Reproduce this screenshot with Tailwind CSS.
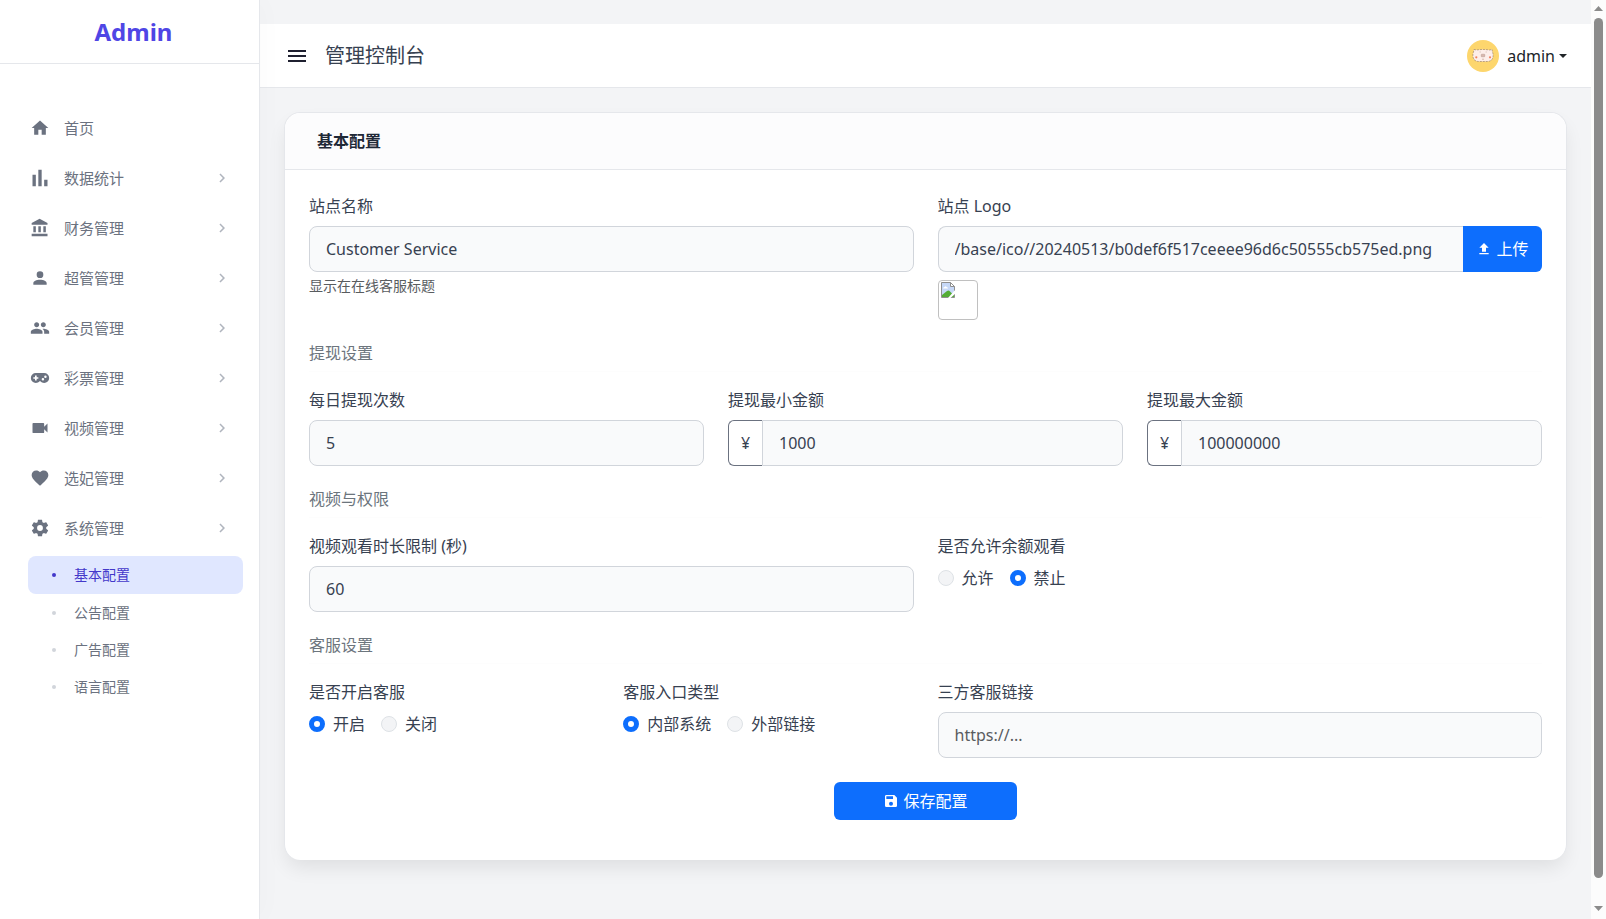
<!DOCTYPE html>
<html lang="zh-CN">
<head>
    <meta charset="UTF-8">
    <meta name="viewport" content="width=device-width, initial-scale=1.0">
    <title>管理控制台</title>
    <script src="https://cdn.jsdelivr.net/npm/@tailwindcss/browser@4"></script>
</head>
<body class="flex min-h-screen bg-[#f3f4f6] text-[#374151] font-['Noto_Sans','Noto_Sans_CJK_SC',sans-serif]">
    <!-- Icons -->
    <svg class="hidden">
        <symbol id="i-chevron" viewBox="0 0 24 24"><path d="M8.59,16.58L13.17,12L8.59,7.41L10,6L16,12L10,18L8.59,16.58Z"/></symbol>
    </svg>

    <!-- Sidebar -->
    <aside class="relative z-10 w-[260px] shrink-0 bg-white border-r border-[#e5e7eb] shadow-[4px_0_24px_rgba(0,0,0,0.02)]">
        <div class="h-16 flex items-center justify-center pl-2 border-b border-[#e5e7eb]">
            <a href="#" class="text-2xl font-bold text-[#4f46e5]">Admin</a>
        </div>
        <nav class="pt-[39px] text-[15px] text-[#6b7280]">
            <a href="#" class="h-[50px] pl-[30px] pr-7 flex items-center gap-3.5">
                <svg class="size-5 fill-current" viewBox="0 0 24 24"><path d="M10,20V14H14V20H19V12H22L12,3L2,12H5V20H10Z"/></svg>
                <span class="flex-1">首页</span>
            </a>
            <a href="#" class="h-[50px] pl-[30px] pr-7 flex items-center gap-3.5">
                <svg class="size-5 fill-current" viewBox="0 0 24 24"><path d="M3,22V8H7V22H3M10,22V2H14V22H10M17,22V14H21V22H17Z"/></svg>
                <span class="flex-1">数据统计</span>
                <svg class="size-[18px] fill-[#b0b5be]"><use href="#i-chevron"/></svg>
            </a>
            <a href="#" class="h-[50px] pl-[30px] pr-7 flex items-center gap-3.5">
                <svg class="size-5 fill-current" viewBox="0 0 24 24"><path d="M11.5,1L2,6V8H21V6M16,10V17H19V10M2,22H21V19H2M10,10V17H13V10M4,10V17H7V10H4Z"/></svg>
                <span class="flex-1">财务管理</span>
                <svg class="size-[18px] fill-[#b0b5be]"><use href="#i-chevron"/></svg>
            </a>
            <a href="#" class="h-[50px] pl-[30px] pr-7 flex items-center gap-3.5">
                <svg class="size-5 fill-current" viewBox="0 0 24 24"><path d="M12,4A4,4 0 0,1 16,8A4,4 0 0,1 12,12A4,4 0 0,1 8,8A4,4 0 0,1 12,4M12,14C16.42,14 20,15.79 20,18V20H4V18C4,15.79 7.58,14 12,14Z"/></svg>
                <span class="flex-1">超管管理</span>
                <svg class="size-[18px] fill-[#b0b5be]"><use href="#i-chevron"/></svg>
            </a>
            <a href="#" class="h-[50px] pl-[30px] pr-7 flex items-center gap-3.5">
                <svg class="size-5 fill-current" viewBox="0 0 24 24"><path d="M16 11c1.66 0 2.99-1.34 2.99-3S17.66 5 16 5c-1.66 0-3 1.34-3 3s1.34 3 3 3zm-8 0c1.66 0 2.99-1.34 2.99-3S9.66 5 8 5C6.34 5 5 6.34 5 8s1.34 3 3 3zm0 2c-2.33 0-7 1.17-7 3.5V19h14v-2.5c0-2.33-4.67-3.5-7-3.5zm8 0c-.29 0-.62.02-.97.05 1.16.84 1.97 1.97 1.97 3.45V19h6v-2.5c0-2.33-4.67-3.5-7-3.5z"/></svg>
                <span class="flex-1">会员管理</span>
                <svg class="size-[18px] fill-[#b0b5be]"><use href="#i-chevron"/></svg>
            </a>
            <a href="#" class="h-[50px] pl-[30px] pr-7 flex items-center gap-3.5">
                <svg class="size-5 fill-current" viewBox="0 0 24 24"><path d="M7,6H17A6,6 0 0,1 23,12A6,6 0 0,1 17,18C15.22,18 13.63,17.23 12.53,16H11.47C10.37,17.23 8.78,18 7,18A6,6 0 0,1 1,12A6,6 0 0,1 7,6M6,9V11H4V13H6V15H8V13H10V11H8V9H6M15.5,12A1.5,1.5 0 0,0 14,13.5A1.5,1.5 0 0,0 15.5,15A1.5,1.5 0 0,0 17,13.5A1.5,1.5 0 0,0 15.5,12M18.5,9A1.5,1.5 0 0,0 17,10.5A1.5,1.5 0 0,0 18.5,12A1.5,1.5 0 0,0 20,10.5A1.5,1.5 0 0,0 18.5,9Z"/></svg>
                <span class="flex-1">彩票管理</span>
                <svg class="size-[18px] fill-[#b0b5be]"><use href="#i-chevron"/></svg>
            </a>
            <a href="#" class="h-[50px] pl-[30px] pr-7 flex items-center gap-3.5">
                <svg class="size-5 fill-current" viewBox="0 0 24 24"><path d="M17,10.5V7A1,1 0 0,0 16,6H4A1,1 0 0,0 3,7V17A1,1 0 0,0 4,18H16A1,1 0 0,0 17,17V13.5L21,17.5V6.5L17,10.5Z"/></svg>
                <span class="flex-1">视频管理</span>
                <svg class="size-[18px] fill-[#b0b5be]"><use href="#i-chevron"/></svg>
            </a>
            <a href="#" class="h-[50px] pl-[30px] pr-7 flex items-center gap-3.5">
                <svg class="size-5 fill-current" viewBox="0 0 24 24"><path d="M12,21.35L10.55,20.03C5.4,15.36 2,12.27 2,8.5C2,5.41 4.42,3 7.5,3C9.24,3 10.91,3.81 12,5.08C13.09,3.81 14.76,3 16.5,3C19.58,3 22,5.41 22,8.5C22,12.27 18.6,15.36 13.45,20.03L12,21.35Z"/></svg>
                <span class="flex-1">选妃管理</span>
                <svg class="size-[18px] fill-[#b0b5be]"><use href="#i-chevron"/></svg>
            </a>
            <a href="#" class="h-[50px] pl-[30px] pr-7 flex items-center gap-3.5">
                <svg class="size-5 fill-current" viewBox="0 0 24 24"><path d="M12,15.5A3.5,3.5 0 0,1 8.5,12A3.5,3.5 0 0,1 12,8.5A3.5,3.5 0 0,1 15.5,12A3.5,3.5 0 0,1 12,15.5M19.43,12.97C19.47,12.65 19.5,12.33 19.5,12C19.5,11.67 19.47,11.34 19.43,11L21.54,9.37C21.73,9.22 21.78,8.95 21.66,8.73L19.66,5.27C19.54,5.05 19.27,4.96 19.05,5.05L16.56,6.05C16.04,5.66 15.5,5.32 14.87,5.07L14.5,2.42C14.46,2.18 14.25,2 14,2H10C9.75,2 9.54,2.18 9.5,2.42L9.13,5.07C8.5,5.32 7.96,5.66 7.44,6.05L4.95,5.05C4.73,4.96 4.46,5.05 4.34,5.27L2.34,8.73C2.21,8.95 2.27,9.22 2.46,9.37L4.57,11C4.53,11.34 4.5,11.67 4.5,12C4.5,12.33 4.53,12.65 4.57,12.97L2.46,14.63C2.27,14.78 2.21,15.05 2.34,15.27L4.34,18.73C4.46,18.95 4.73,19.03 4.95,18.95L7.44,17.94C7.96,18.34 8.5,18.68 9.13,18.93L9.5,21.58C9.54,21.82 9.75,22 10,22H14C14.25,22 14.46,21.82 14.5,21.58L14.87,18.93C15.5,18.67 16.04,18.34 16.56,17.94L19.05,18.95C19.27,19.03 19.54,18.95 19.66,18.73L21.66,15.27C21.78,15.05 21.73,14.78 21.54,14.63L19.43,12.97Z"/></svg>
                <span class="flex-1">系统管理</span>
                <svg class="size-[18px] fill-[#b0b5be]"><use href="#i-chevron"/></svg>
            </a>
            <!-- Submenu -->
            <div class="ml-7 mr-4 pt-[3px] text-sm">
                <a href="#" class="h-[38px] pl-6 flex items-center gap-[18px] rounded-lg bg-[#e0e7ff] text-[#4338ca]"><span class="size-1 rounded-full bg-[#4338ca]"></span>基本配置</a>
                <a href="#" class="h-[37px] pl-6 flex items-center gap-[18px]"><span class="size-1 rounded-full bg-[#d1d5db]"></span>公告配置</a>
                <a href="#" class="h-[37px] pl-6 flex items-center gap-[18px]"><span class="size-1 rounded-full bg-[#d1d5db]"></span>广告配置</a>
                <a href="#" class="h-[37px] pl-6 flex items-center gap-[18px]"><span class="size-1 rounded-full bg-[#d1d5db]"></span>语言配置</a>
            </div>
        </nav>
    </aside>

    <div class="flex-1 min-w-0 pt-6">
        <!-- Top bar -->
        <header class="h-16 pl-[25px] pr-6 flex items-center bg-white border-b border-[#e5e7eb]">
            <button type="button" aria-label="菜单">
                <svg class="size-6 fill-[#1f2030]" viewBox="0 0 24 24"><path d="M3,6H21V8H3V6M3,11H21V13H3V11M3,16H21V18H3V16Z"/></svg>
            </button>
            <h1 class="ml-4 flex-1 text-xl">管理控制台</h1>
            <button type="button" class="flex items-center text-[#212529]">
                <svg class="size-8 mr-2" viewBox="0 0 32 32">
                    <circle cx="16" cy="16" r="16" fill="#fdd66d"/>
                    <path d="M7 9.500l2.500.5q6.500-1 13 0l2.500-.5.5 2.500q1.500 4-.5 7.500-2 2-4.500 2h-9q-2.500 0-4.500-2-2-3.500-.5-7.500z" fill="#fdeeea" stroke="#8d7567" stroke-width=".6" stroke-dasharray="2 1"/>
                    <rect x="14.200" y="14.200" width="3.600" height="2.600" rx=".6" fill="#d9b8ae" stroke="#a98c84" stroke-width=".4"/>
                    <circle cx="9.300" cy="17.300" r="1.100" fill="#f0805f"/>
                    <circle cx="23" cy="17.300" r="1.100" fill="#f0805f"/>
                    <circle cx="16" cy="19.300" r=".7" fill="#c9a79c"/>
                    <path d="M12.500 12h1.500M18.500 12H20" stroke="#cdb4aa" stroke-width=".6"/>
                </svg>
                admin
                <span class="ml-1 border-x-4 border-x-transparent border-t-4 border-t-[#212529]"></span>
            </button>
        </header>

        <main class="p-6 pb-14">
            <section class="rounded-2xl bg-white border border-[#e5e7eb] border-b-0 shadow-[0_10px_20px_-3px_rgba(0,0,0,0.09)]">
                <h2 class="h-[57px] px-8 flex items-center rounded-t-2xl bg-[#fcfcfd] border-b border-[#e5e7eb] font-semibold text-[#1f2937]">基本配置</h2>

                <form class="px-6 pt-6 pb-10">
                    <div class="grid grid-cols-2 gap-6">
                        <div>
                            <label for="site-name" class="block mb-2">站点名称</label>
                            <input id="site-name" type="text" value="Customer Service" class="block w-full h-[46px] px-4 rounded-lg border border-[#d1d5db] bg-[#f9fafb]">
                            <p class="mt-1 text-sm text-[#595c5f]">显示在在线客服标题</p>
                        </div>
                        <div>
                            <label for="site-logo" class="block mb-2">站点 Logo</label>
                            <div class="flex h-[46px]">
                                <input id="site-logo" type="text" value="/base/ico//20240513/b0def6f517ceeee96d6c50555cb575ed.png" class="flex-1 min-w-0 px-4 rounded-l-lg border border-r-0 border-[#d1d5db] bg-[#f9fafb]">
                                <button type="button" class="w-[79px] flex items-center justify-center gap-1 rounded-r-md bg-[#0d6efd] text-white">
                                    <svg class="size-4 fill-current" viewBox="0 0 24 24"><path d="M9,16V10H5L12,3L19,10H15V16H9M5,20V18H19V20H5Z"/></svg>
                                    上传
                                </button>
                            </div>
                            <!-- Logo preview, image missing -->
                            <div class="mt-2 size-10 p-px rounded border border-[#c0c0c0]">
                                <svg class="size-4" viewBox="0 0 16 16">
                                    <path d="M1.500 .5h9l4 4v11h-13z" fill="#c6d8f7" stroke="#8f8f8f"/>
                                    <path d="M10.500 .5v4h4z" fill="#fff" stroke="#8f8f8f"/>
                                    <path d="M3 6.500q0-1.500 1.500-1.500 1-1.500 2 0 1.500 0 1.500 1.500z" fill="#fff"/>
                                    <path d="M2 15v-2l5-4q2-1 3 .5l4 4V15z" fill="#54ad35"/>
                                    <path d="M15.500 7.500L8 16h2.500l5-4.500z" fill="#fff"/>
                                </svg>
                            </div>
                        </div>
                    </div>

                    <h3 class="mt-6 mb-4 pb-2 leading-[19px] border-b border-[#fdfdfd] text-[#6c757d]">提现设置</h3>
                    <div class="grid grid-cols-3 gap-6">
                        <div>
                            <label for="daily" class="block mb-2">每日提现次数</label>
                            <input id="daily" type="text" value="5" class="block w-full h-[46px] px-4 rounded-lg border border-[#d1d5db] bg-[#f9fafb]">
                        </div>
                        <div>
                            <label for="min-amount" class="block mb-2">提现最小金额</label>
                            <div class="flex h-[46px]">
                                <span class="w-[34px] flex items-center justify-center rounded-l-md border border-r-0 border-[#6b7280]">¥</span>
                                <input id="min-amount" type="text" value="1000" class="flex-1 min-w-0 px-4 rounded-r-lg border border-[#d1d5db] bg-[#f9fafb]">
                            </div>
                        </div>
                        <div>
                            <label for="max-amount" class="block mb-2">提现最大金额</label>
                            <div class="flex h-[46px]">
                                <span class="w-[34px] flex items-center justify-center rounded-l-md border border-r-0 border-[#6b7280]">¥</span>
                                <input id="max-amount" type="text" value="100000000" class="flex-1 min-w-0 px-4 rounded-r-lg border border-[#d1d5db] bg-[#f9fafb]">
                            </div>
                        </div>
                    </div>

                    <h3 class="mt-6 mb-4 pb-2 leading-[19px] border-b border-[#fdfdfd] text-[#6c757d]">视频与权限</h3>
                    <div class="grid grid-cols-2 gap-6">
                        <div>
                            <label for="watch-limit" class="block mb-2">视频观看时长限制 (秒)</label>
                            <input id="watch-limit" type="text" value="60" class="block w-full h-[46px] px-4 rounded-lg border border-[#d1d5db] bg-[#f9fafb]">
                        </div>
                        <fieldset>
                            <legend class="mb-2">是否允许余额观看</legend>
                            <div class="flex gap-4">
                                <label class="flex items-center gap-2"><input type="radio" name="balance" class="appearance-none size-4 rounded-full border border-[#dee2e6] bg-[#f3f4f6] checked:border-5 checked:border-[#0d6efd] checked:bg-white">允许</label>
                                <label class="flex items-center gap-2"><input type="radio" name="balance" checked class="appearance-none size-4 rounded-full border border-[#dee2e6] bg-[#f3f4f6] checked:border-5 checked:border-[#0d6efd] checked:bg-white">禁止</label>
                            </div>
                        </fieldset>
                    </div>

                    <h3 class="mt-6 mb-4 pb-2 leading-[19px] border-b border-[#fdfdfd] text-[#6c757d]">客服设置</h3>
                    <div class="grid grid-cols-4 gap-6">
                        <fieldset>
                            <legend class="mb-2">是否开启客服</legend>
                            <div class="flex gap-4">
                                <label class="flex items-center gap-2"><input type="radio" name="service" checked class="appearance-none size-4 rounded-full border border-[#dee2e6] bg-[#f3f4f6] checked:border-5 checked:border-[#0d6efd] checked:bg-white">开启</label>
                                <label class="flex items-center gap-2"><input type="radio" name="service" class="appearance-none size-4 rounded-full border border-[#dee2e6] bg-[#f3f4f6] checked:border-5 checked:border-[#0d6efd] checked:bg-white">关闭</label>
                            </div>
                        </fieldset>
                        <fieldset>
                            <legend class="mb-2">客服入口类型</legend>
                            <div class="flex gap-4">
                                <label class="flex items-center gap-2"><input type="radio" name="entry" checked class="appearance-none size-4 rounded-full border border-[#dee2e6] bg-[#f3f4f6] checked:border-5 checked:border-[#0d6efd] checked:bg-white">内部系统</label>
                                <label class="flex items-center gap-2"><input type="radio" name="entry" class="appearance-none size-4 rounded-full border border-[#dee2e6] bg-[#f3f4f6] checked:border-5 checked:border-[#0d6efd] checked:bg-white">外部链接</label>
                            </div>
                        </fieldset>
                        <div class="col-span-2">
                            <label for="service-url" class="block mb-2">三方客服链接</label>
                            <input id="service-url" type="text" placeholder="https://..." class="block w-full h-[46px] px-4 rounded-lg border border-[#d1d5db] bg-[#f9fafb] placeholder:text-[#595c5f]">
                        </div>
                    </div>

                    <div class="mt-6 flex justify-center">
                        <button type="submit" class="h-[38px] px-[49px] flex items-center gap-1 rounded-md bg-[#0d6efd] text-white">
                            <svg class="size-4 fill-current" viewBox="0 0 24 24"><path d="M15,9H5V5H15M12,19A3,3 0 0,1 9,16A3,3 0 0,1 12,13A3,3 0 0,1 15,16A3,3 0 0,1 12,19M17,3H5C3.89,3 3,3.9 3,5V19A2,2 0 0,0 5,21H19A2,2 0 0,0 21,19V7L17,3Z"/></svg>
                            保存配置
                        </button>
                    </div>
                </form>
            </section>
        </main>
    </div>

    <!-- Scrollbar -->
    <div class="sticky top-0 h-screen w-[15px] shrink-0 pt-1.5 pb-2 flex flex-col items-center bg-[#fcfcfc]" aria-hidden="true">
        <svg class="w-[9px] h-[5px] fill-[#8b8b8b]" viewBox="0 0 9 5"><path d="M4.500 0L9 5H0z"/></svg>
        <div class="mt-[7px] mb-7 flex-1 w-[9px] rounded-full bg-[#8b8b8b]"></div>
        <svg class="w-[9px] h-[5px] fill-[#8b8b8b]" viewBox="0 0 9 5"><path d="M0 0H9L4.500 5z"/></svg>
    </div>
</body>
</html>
